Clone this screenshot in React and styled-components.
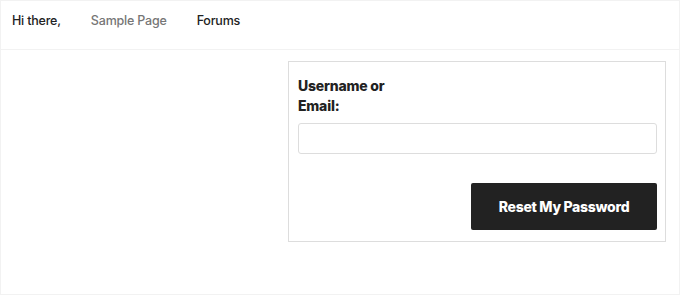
import React from 'react'
import styled, { createGlobalStyle } from 'styled-components'

const GlobalStyle = createGlobalStyle`
  html, body {
    margin: 0;
    padding: 0;
    background: #fff;
  }
  body {
    font-family: 'Inter', 'Liberation Sans', sans-serif;
    color: #222;
  }
  * {
    box-sizing: border-box;
  }
`

const Page = styled.div`
  width: 680px;
  height: 295px;
  border: 1px solid #f2f2f2;
  display: flex;
  flex-direction: column;
`

const Header = styled.nav`
  height: 49px;
  border-bottom: 1px solid #f2f2f2;
  display: flex;
  align-items: center;
  gap: 30px;
  padding: 0 0 10px 11px;
`

const NavItem = styled.a`
  font-size: 12.5px;
  font-weight: 500;
  letter-spacing: -0.2px;
  color: ${(p) => (p.$muted ? '#767676' : '#222')};
  text-decoration: none;
  cursor: pointer;
`

const Main = styled.main`
  display: flex;
  padding: 11px 0 0 287px;
`

const Form = styled.form`
  width: 378px;
  height: 181px;
  border: 1px solid #ddd;
  padding: 14px 8px 0 9px;
  display: flex;
  flex-direction: column;
`

const Label = styled.label`
  width: 100px;
  font-size: 14px;
  line-height: 20px;
  font-weight: 800;
  letter-spacing: -0.2px;
  color: #222;
`

const Input = styled.input`
  margin-top: 7px;
  width: 359px;
  height: 31px;
  border: 1px solid #ddd;
  border-radius: 3px;
  background: #fff;
  outline: none;
`

const Actions = styled.div`
  display: flex;
  justify-content: flex-end;
  margin-top: 29px;
`

const Button = styled.button`
  width: 186px;
  height: 47px;
  border: none;
  border-radius: 2px;
  background: #222;
  color: #fff;
  font-family: 'Inter', 'Liberation Sans', sans-serif;
  font-size: 14px;
  font-weight: 800;
  letter-spacing: -0.3px;
  cursor: pointer;
`

export default function App() {
  return (
    <>
      <GlobalStyle />
      <Page>
        <Header>
          <NavItem>Hi there,</NavItem>
          <NavItem $muted>Sample Page</NavItem>
          <NavItem>Forums</NavItem>
        </Header>
        <Main>
          <Form onSubmit={(e) => e.preventDefault()}>
            <Label htmlFor='user_login'>Username or Email:</Label>
            <Input id='user_login' type='text' />
            <Actions>
              <Button type='submit'>Reset My Password</Button>
            </Actions>
          </Form>
        </Main>
      </Page>
    </>
  )
}
